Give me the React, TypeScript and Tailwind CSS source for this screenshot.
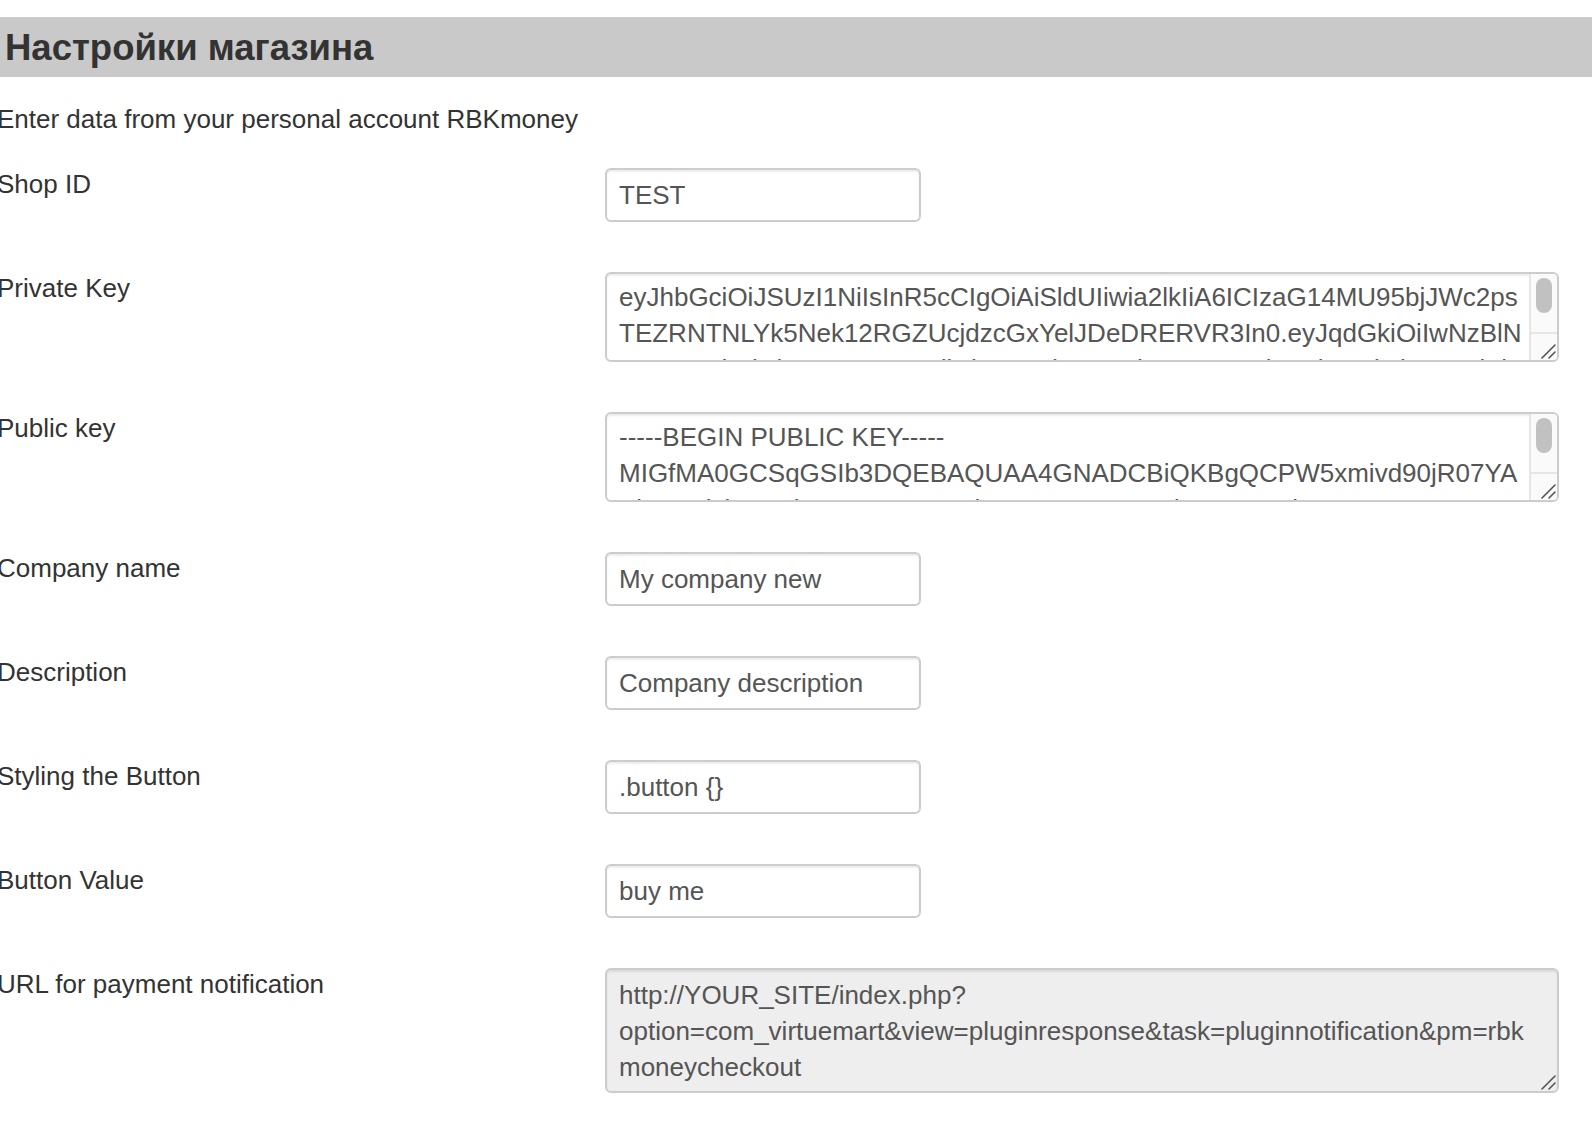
import React from "react";

const jwt =
  "eyJhbGciOiJSUzI1NiIsInR5cCIgOiAiSldUIiwia2lkIiA6ICIzaG14MU95bjJWc2psTEZRNTNLYk5Nek12RGZUcjdzcGxYelJDeDRERVR3In0.eyJqdGkiOiIwNzBlNmY4ZC1hZjRlLTQ0OWItOTliNi1mODhmZGJiMTYwNzEiLCJleHAiOjAsIm5iZiI6MA";

const pem =
  "-----BEGIN PUBLIC KEY-----\nMIGfMA0GCSqGSIb3DQEBAQUAA4GNADCBiQKBgQCPW5xmivd90jR07YA\nPbRs4rjcbUKDjeHxwtWzQcV4hrZDLgmzXBeGdxtyPgcPSbvyPrLBaNW\n-----END PUBLIC KEY-----";

const notifyUrl =
  "http://YOUR_SITE/index.php?option=com_virtuemart&view=pluginresponse&task=pluginnotification&pm=rbkmoneycheckout";

const fieldBase =
  "block border-2 border-[#ccc] rounded-[6px] pl-[12px] text-[26px] leading-[36px] text-[#555] shadow-[inset_0_2px_2px_rgba(0,0,0,0.075)] outline-none";

type Field = {
  label: string;
  kind: "input" | "area" | "url";
  value: string;
};

const fields: Field[] = [
  { label: "Shop ID", kind: "input", value: "TEST" },
  { label: "Private Key", kind: "area", value: jwt },
  { label: "Public key", kind: "area", value: pem },
  { label: "Company name", kind: "input", value: "My company new" },
  { label: "Description", kind: "input", value: "Company description" },
  { label: "Styling the Button", kind: "input", value: ".button {}" },
  { label: "Button Value", kind: "input", value: "buy me" },
  { label: "URL for payment notification", kind: "url", value: notifyUrl },
];

function Grip() {
  return (
    <svg width="16" height="16" viewBox="0 0 16 16" className="block">
      <path d="M2 15 L15 2 M9 15 L15 9" stroke="#555" strokeWidth="1.6" strokeLinecap="round" fill="none" />
    </svg>
  );
}

function Control({ field }: { field: Field }) {
  if (field.kind === "input") {
    return (
      <input
        type="text"
        defaultValue={field.value}
        className={`${fieldBase} pr-[12px] py-[7px] w-[316px] h-[54px] bg-white`}
      />
    );
  }
  if (field.kind === "area") {
    return (
      <div className="relative w-[954px] h-[90px]">
        <textarea
          defaultValue={field.value}
          className={`${fieldBase} pr-[32px] pt-[5px] pb-[6px] w-full h-full bg-white overflow-hidden resize-none`}
        />
        {/* scrollbar + resize corner, drawn over the box */}
        <div className="absolute top-[2px] right-[2px] bottom-[2px] w-[28px] flex flex-col border-l-2 border-[#e6e6e6] bg-[#fafafa] rounded-r-[4px]">
          <div className="flex-1 pt-[4px] pl-[5px]">
            <div className="w-[16px] h-[35px] rounded-full bg-[#c1c1c1]" />
          </div>
          <div className="h-[28px] border-t-2 border-[#e6e6e6] flex items-end justify-end pr-[1px] pb-[1px]">
            <Grip />
          </div>
        </div>
      </div>
    );
  }
  return (
    <div className="relative w-[954px] h-[125px]">
      <textarea
        readOnly
        defaultValue={field.value}
        className={`${fieldBase} pr-[12px] pt-[7px] pb-[6px] w-full h-full bg-[#eee] overflow-hidden resize-none`}
      />
      <div className="absolute right-[3px] bottom-[3px]">
        <Grip />
      </div>
    </div>
  );
}

export default function App() {
  return (
    <div className="min-h-screen bg-white pt-[17px] font-['Liberation_Sans',Arial,sans-serif] text-[#333]">
      <div className="h-[60px] bg-[#c9c9c9] flex items-center pl-[5px] pt-[3px]">
        <h2 className="text-[36.5px] font-bold leading-none text-[#333]">Настройки магазина</h2>
      </div>

      <div className="-ml-[3px]">
        <p className="mt-[24px] text-[26px] leading-[36px]">Enter data from your personal account RBKmoney</p>

        <div className="mt-[31px] flex flex-col gap-[50px]">
          {fields.map((f) => (
            <div key={f.label} className="flex items-start">
              <label className="w-[608px] shrink-0 text-[26px] leading-[32px] text-[#333]">{f.label}</label>
              <Control field={f} />
            </div>
          ))}
        </div>
      </div>
    </div>
  );
}
